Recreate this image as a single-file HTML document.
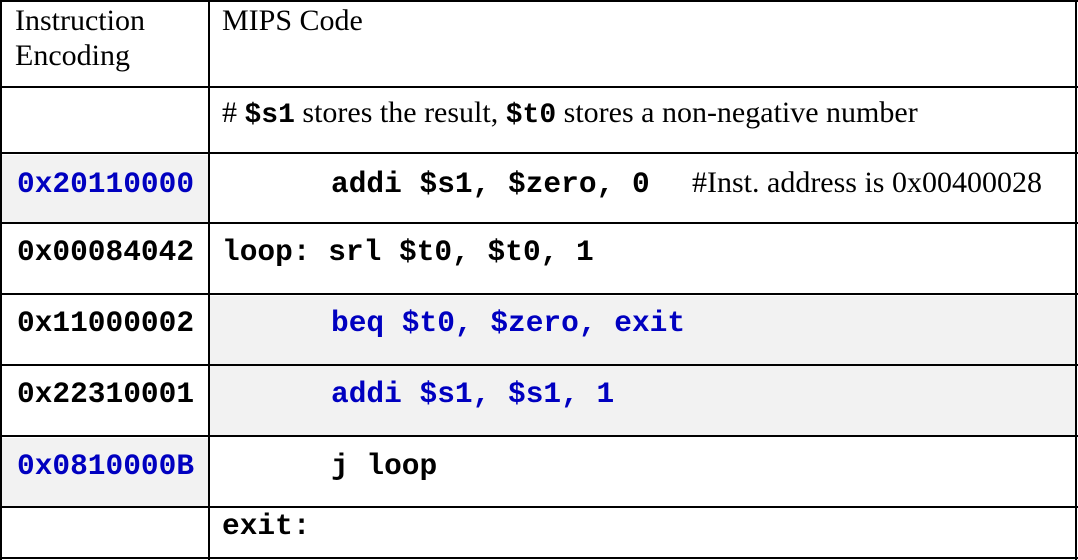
<!DOCTYPE html>
<html><head><meta charset="utf-8"><style>
html,body{margin:0;padding:0;background:#fff;}
body{width:1078px;height:560px;position:relative;overflow:hidden;}
.h{position:absolute;left:0;width:1078px;height:2px;background:#000;}
.v{position:absolute;top:0;width:2px;height:560px;background:#000;}
.g{position:absolute;background:#f2f2f2;}
.s{position:absolute;font-family:"Liberation Serif",serif;font-size:30px;line-height:35px;color:#000;white-space:pre;}
.m{position:absolute;font-family:"Liberation Mono",monospace;font-weight:bold;font-size:29.5px;line-height:29px;color:#000;white-space:pre;}
.b{color:#0000c0;}
.im{font-family:'Liberation Mono',monospace;font-weight:bold;font-size:28px}
</style></head><body>
<div class="g" style="left:2px;top:155px;width:207px;height:68px"></div>
<div class="g" style="left:210px;top:296px;width:866px;height:140px"></div>
<div class="g" style="left:2px;top:438px;width:207px;height:69px"></div>

<div class="h" style="top:0"></div>
<div class="h" style="top:86px"></div>
<div class="h" style="top:152px"></div>
<div class="h" style="top:222px"></div>
<div class="h" style="top:293px"></div>
<div class="h" style="top:364px"></div>
<div class="h" style="top:435px"></div>
<div class="h" style="top:506px"></div>
<div class="h" style="top:557px"></div>
<div class="v" style="left:0"></div>
<div class="v" style="left:208px"></div>
<div class="v" style="left:1075px"></div>

<div class="s" style="left:15px;top:3px">Instruction<br>Encoding</div>
<div class="s" style="left:222px;top:3px">MIPS Code</div>
<div class="s" style="left:222px;top:95px"># <span class="im">$s1</span> stores the result, <span class="im">$t0</span> stores a non-negative number</div>

<div class="m b" style="left:17px;top:170px">0x20110000</div>
<div class="m" style="left:331px;top:170px">addi $s1, $zero, 0</div>
<div class="s" style="left:692px;top:165px">#Inst. address is 0x00400028</div>

<div class="m" style="left:17px;top:238px">0x00084042</div>
<div class="m" style="left:222px;top:238px">loop: srl $t0, $t0, 1</div>

<div class="m" style="left:17px;top:309px">0x11000002</div>
<div class="m b" style="left:331px;top:309px">beq $t0, $zero, exit</div>

<div class="m" style="left:17px;top:380px">0x22310001</div>
<div class="m b" style="left:331px;top:380px">addi $s1, $s1, 1</div>

<div class="m b" style="left:17px;top:452px">0x0810000B</div>
<div class="m" style="left:331px;top:452px">j loop</div>

<div class="m" style="left:222px;top:512px">exit:</div>
</body></html>
